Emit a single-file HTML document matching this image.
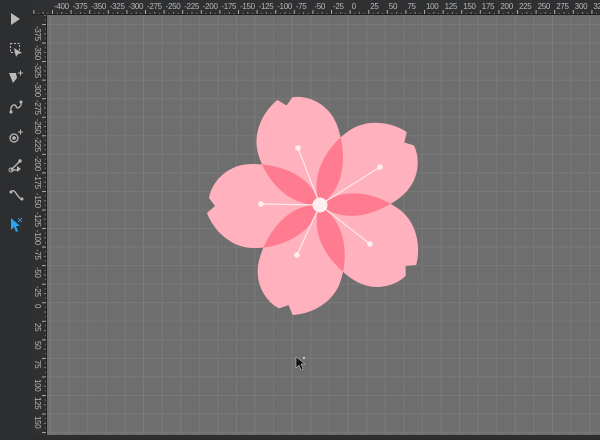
<!DOCTYPE html>
<html><head><meta charset="utf-8"><style>
*{margin:0;padding:0;box-sizing:border-box}
body{width:600px;height:435px;overflow:hidden;background:#2c2d2f;position:relative;font-family:"Liberation Sans",sans-serif}
#tb{position:absolute;left:0;top:0;width:32px;height:435px;background:#2d2e30}
#top{position:absolute;left:32px;top:0;width:568px;height:15px;background:#2f3032;border-bottom:1px solid #1e1e1e;overflow:hidden}
#left{position:absolute;left:32px;top:15px;width:15px;height:420px;background:#2f3032;border-right:1px solid #1e1e1e;overflow:hidden}
#cv{position:absolute;left:47px;top:15px;width:553px;height:420px;background-color:#6e6e6e;
background-image:linear-gradient(to right,#7a7a7a 1px,transparent 1px),linear-gradient(to bottom,#7a7a7a 1px,transparent 1px);
background-size:18.6px 18.55px;background-position:3px 9px}
.t{position:absolute;top:2px;font-size:8px;color:#b8b8b8;letter-spacing:-0.3px}
.v{position:absolute;left:1px;font-size:8px;color:#b8b8b8;writing-mode:vertical-rl;letter-spacing:-0.3px}
</style></head><body>
<div id="tb">
<svg width="32" height="435">
<polygon points="11,13 11,25 20,19" fill="#bbb"/>
<rect x="10.5" y="43.5" width="9" height="9" fill="none" stroke="#bbb" stroke-dasharray="2,1.5"/>
<polygon points="14,48 22,53 18,54 16,57" fill="#bbb"/>
<polygon points="9,73 16,73 17,78 13,83" fill="#bbb"/><path d="M18 73h5M20.5 70.5v5" stroke="#bbb"/>
<path d="M11 111 C10 104 16 104 16 106 C16 110 22 107 21 103" stroke="#bbb" fill="none" stroke-width="1.3"/><circle cx="11" cy="112" r="1.5" fill="#bbb"/><circle cx="21" cy="102" r="1.5" fill="#bbb"/>
<circle cx="14" cy="138" r="4" fill="none" stroke="#bbb" stroke-width="1.3"/><circle cx="14" cy="138" r="1.8" fill="#bbb"/><path d="M18 132h5M20.5 129.5v5" stroke="#bbb"/>
<path d="M11 170 L20 161 M11 170 L19 170" stroke="#bbb" stroke-width="1.3"/><circle cx="11" cy="170" r="2" fill="none" stroke="#bbb"/><circle cx="20" cy="161" r="1.7" fill="#bbb"/><polygon points="17,166 17,172 21,169" fill="#bbb"/>
<path d="M11 192 C14 188 16 194 18 196 S21 200 22 199" stroke="#bbb" fill="none" stroke-width="1.3"/><circle cx="11" cy="192" r="1.5" fill="#bbb"/><circle cx="22" cy="199" r="1.5" fill="#bbb"/>
<polygon points="11,218 11,230 14,227 16,232 18,231 16,226 20,226" fill="#2ea4f0"/><path d="M18 218l4 4M22 218l-4 4" stroke="#2ea4f0" stroke-width="0.8"/>
</svg>
</div>
<div id="top">
<span class="t" style="left:22px">-400</span><span class="t" style="left:40.6px">-375</span><span class="t" style="left:59.2px">-350</span><span class="t" style="left:77.8px">-325</span><span class="t" style="left:96.4px">-300</span><span class="t" style="left:115px">-275</span><span class="t" style="left:133.6px">-250</span><span class="t" style="left:152.2px">-225</span><span class="t" style="left:170.8px">-200</span><span class="t" style="left:189.4px">-175</span><span class="t" style="left:208px">-150</span><span class="t" style="left:226.6px">-125</span><span class="t" style="left:245.2px">-100</span><span class="t" style="left:263.8px">-75</span><span class="t" style="left:282.4px">-50</span><span class="t" style="left:301px">-25</span><span class="t" style="left:319.6px">0</span><span class="t" style="left:338.2px">25</span><span class="t" style="left:356.8px">50</span><span class="t" style="left:375.4px">75</span><span class="t" style="left:394px">100</span><span class="t" style="left:412.6px">125</span><span class="t" style="left:431.2px">150</span><span class="t" style="left:449.8px">175</span><span class="t" style="left:468.4px">200</span><span class="t" style="left:487px">225</span><span class="t" style="left:505.6px">250</span><span class="t" style="left:524.2px">275</span><span class="t" style="left:542.8px">300</span><span class="t" style="left:561.4px">325</span>
<svg style="position:absolute;left:0;top:0" width="568" height="15"><defs><pattern id="tp" width="18.6" height="15" patternUnits="userSpaceOnUse" x="20"><rect x="0" y="10" width="1" height="5" fill="#aaa"/><rect x="4.65" y="13" width="1" height="2" fill="#888"/><rect x="9.3" y="12" width="1" height="3" fill="#888"/><rect x="13.95" y="13" width="1" height="2" fill="#888"/></pattern></defs><rect width="568" height="15" fill="url(#tp)"/></svg>
</div>
<div id="left">
<span class="v" style="top:11px">-375</span><span class="v" style="top:29.6px">-350</span><span class="v" style="top:48.1px">-325</span><span class="v" style="top:66.7px">-300</span><span class="v" style="top:85.2px">-275</span><span class="v" style="top:103.8px">-250</span><span class="v" style="top:122.3px">-225</span><span class="v" style="top:140.9px">-200</span><span class="v" style="top:159.4px">-175</span><span class="v" style="top:178px">-150</span><span class="v" style="top:196.5px">-125</span><span class="v" style="top:215.1px">-100</span><span class="v" style="top:233.6px">-75</span><span class="v" style="top:252.2px">-50</span><span class="v" style="top:270.7px">-25</span><span class="v" style="top:289.3px">0</span><span class="v" style="top:307.8px">25</span><span class="v" style="top:326.4px">50</span><span class="v" style="top:344.9px">75</span><span class="v" style="top:363.5px">100</span><span class="v" style="top:382px">125</span><span class="v" style="top:400.6px">150</span>
<svg style="position:absolute;left:0;top:0" width="15" height="420"><defs><pattern id="lp" width="15" height="18.55" patternUnits="userSpaceOnUse" y="9"><rect x="10" y="0" width="5" height="1" fill="#aaa"/><rect x="13" y="4.6" width="2" height="1" fill="#888"/><rect x="12" y="9.3" width="3" height="1" fill="#888"/><rect x="13" y="13.9" width="2" height="1" fill="#888"/></pattern></defs><rect width="15" height="420" fill="url(#lp)"/></svg>
</div>
<div id="cv"></div>
<svg style="position:absolute;left:0;top:0" width="600" height="435">
<defs>
<path id="pet" d="M0,0 C8,-30 40,-44 68,-43 C92,-42 108,-22 113,-8 L105,-1 L111,7 C108,24 92,41 68,41 C40,41 8,30 0,0 Z"/>
</defs>
<g transform="translate(320,205)">
<clipPath id="c180"><use href="#pet" transform="rotate(180)"/></clipPath>
<clipPath id="c252"><use href="#pet" transform="rotate(252)"/></clipPath>
<clipPath id="c324"><use href="#pet" transform="rotate(324)"/></clipPath>
<clipPath id="c36"><use href="#pet" transform="rotate(36)"/></clipPath>
<clipPath id="c108"><use href="#pet" transform="rotate(108)"/></clipPath>
<g fill="#ffb1bd">
<use href="#pet" transform="rotate(180)"/>
<use href="#pet" transform="rotate(252)"/>
<use href="#pet" transform="rotate(324)"/>
<use href="#pet" transform="rotate(36)"/>
<use href="#pet" transform="rotate(108)"/>
</g>
<g fill="#ff7b90">
<g clip-path="url(#c180)"><use href="#pet" transform="rotate(252)"/></g>
<g clip-path="url(#c252)"><use href="#pet" transform="rotate(324)"/></g>
<g clip-path="url(#c324)"><use href="#pet" transform="rotate(36)"/></g>
<g clip-path="url(#c36)"><use href="#pet" transform="rotate(108)"/></g>
<g clip-path="url(#c108)"><use href="#pet" transform="rotate(180)"/></g>
</g>
<g stroke="#fde8ec" stroke-width="1.2">
<line x1="0" y1="0" x2="-22" y2="-57"/><line x1="0" y1="0" x2="60" y2="-38"/><line x1="0" y1="0" x2="50" y2="39"/><line x1="0" y1="0" x2="-23" y2="50"/><line x1="0" y1="0" x2="-59" y2="-1"/>
</g>
<g fill="#fdeef0"><circle cx="-22" cy="-57" r="2.8"/><circle cx="60" cy="-38" r="2.8"/><circle cx="50" cy="39" r="2.8"/><circle cx="-23" cy="50" r="2.8"/><circle cx="-59" cy="-1" r="2.8"/><circle r="7.5"/></g>
</g>
<polygon points="296,357 296,368 299,365 301,370 303,369 301,364 305,364" fill="#111" stroke="#ddd" stroke-width="0.5"/>
<path d="M303 357l2 2M305 357l-2 2" stroke="#ddd" stroke-width="0.6"/>
</svg>
</body></html>
